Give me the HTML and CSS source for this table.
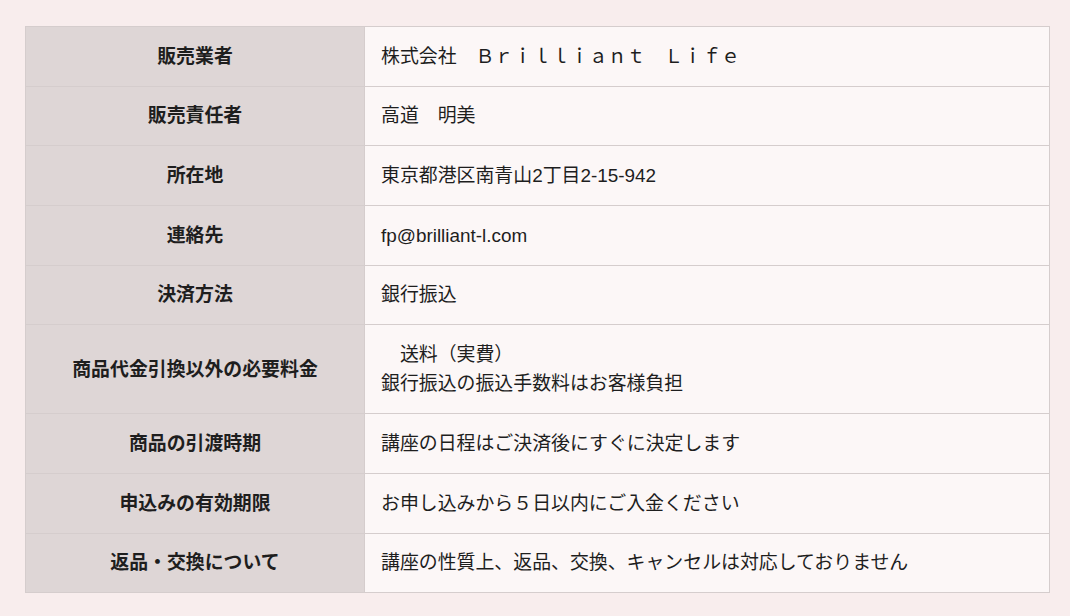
FILE: index.html
```html
<!DOCTYPE html>
<html lang="ja">
<head>
<meta charset="utf-8">
<title>特定商取引法に基づく表記</title>
<link rel="stylesheet" href="styles.css">
</head>
<body>
<table class="info">
  <tbody>
    <tr><th>販売業者</th><td>株式会社　Ｂｒｉｌｌｉａｎｔ　Ｌｉｆｅ</td></tr>
    <tr><th>販売責任者</th><td>高道　明美</td></tr>
    <tr><th>所在地</th><td>東京都港区南青山2丁目2-15-942</td></tr>
    <tr><th>連絡先</th><td>fp@brilliant-l.com</td></tr>
    <tr><th>決済方法</th><td>銀行振込</td></tr>
    <tr><th>商品代金引換以外の必要料金</th><td>　送料（実費）<br>銀行振込の振込手数料はお客様負担</td></tr>
    <tr><th>商品の引渡時期</th><td>講座の日程はご決済後にすぐに決定します</td></tr>
    <tr><th>申込みの有効期限</th><td>お申し込みから５日以内にご入金ください</td></tr>
    <tr><th>返品・交換について</th><td>講座の性質上、返品、交換、キャンセルは対応しておりません</td></tr>
  </tbody>
</table>
</body>
</html>
```
FILE: styles.css
```css
html, body {
  margin: 0;
  padding: 0;
}
body {
  background: #f8eded;
  font-family: "Liberation Sans", "Noto Sans CJK JP", sans-serif;
  color: #1e1e1e;
  padding: 26px 0 0 25px;
}
.info {
  border-collapse: collapse;
  width: 1025px;
  font-size: 18.9px;
  line-height: 29.3px;
}
.info th,
.info td {
  border: 1px solid #d5cdcd;
  padding: 14.7px 16px;
  vertical-align: middle;
}
.info th {
  width: 306px;
  background: #ded6d6;
  font-weight: bold;
  text-align: center;
}
.info td {
  background: #fcf7f7;
  text-align: left;
}
```
